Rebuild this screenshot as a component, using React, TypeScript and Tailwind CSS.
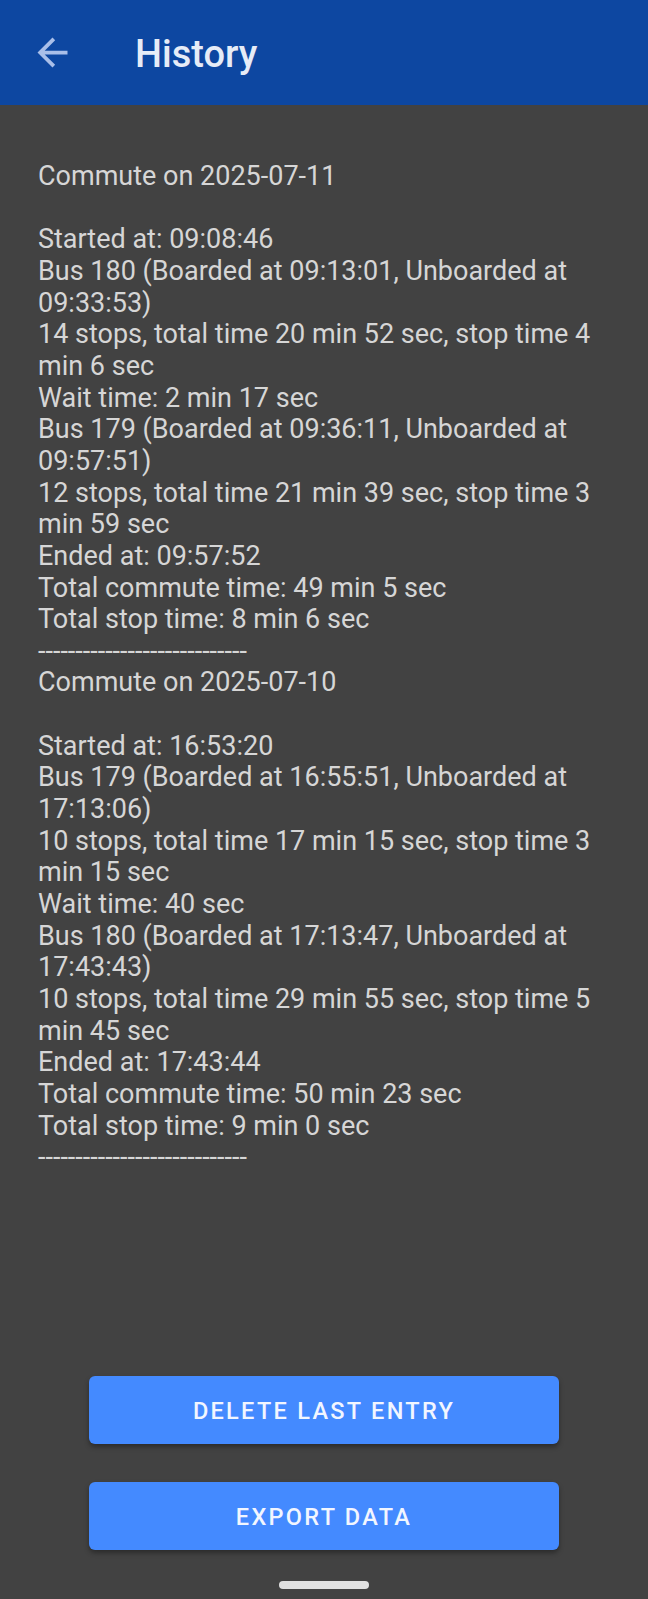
import React from "react";

const lines: string[] = [
  "Commute on 2025-07-11",
  "",
  "Started at: 09:08:46",
  "Bus 180 (Boarded at 09:13:01, Unboarded at 09:33:53)",
  "14 stops, total time 20 min 52 sec, stop time 4 min 6 sec",
  "Wait time: 2 min 17 sec",
  "Bus 179 (Boarded at 09:36:11, Unboarded at 09:57:51)",
  "12 stops, total time 21 min 39 sec, stop time 3 min 59 sec",
  "Ended at: 09:57:52",
  "Total commute time: 49 min 5 sec",
  "Total stop time: 8 min 6 sec",
  "----------------------------",
  "Commute on 2025-07-10",
  "",
  "Started at: 16:53:20",
  "Bus 179 (Boarded at 16:55:51, Unboarded at 17:13:06)",
  "10 stops, total time 17 min 15 sec, stop time 3 min 15 sec",
  "Wait time: 40 sec",
  "Bus 180 (Boarded at 17:13:47, Unboarded at 17:43:43)",
  "10 stops, total time 29 min 55 sec, stop time 5 min 45 sec",
  "Ended at: 17:43:44",
  "Total commute time: 50 min 23 sec",
  "Total stop time: 9 min 0 sec",
  "----------------------------",
];

export default function App() {
  return (
    <div
      className="flex h-[1599px] w-full flex-col bg-[#424242]"
      style={{ fontFamily: "Roboto, 'Noto Sans', sans-serif" }}
    >
      <header className="flex h-[105px] shrink-0 items-center bg-[#0d47a1]">
        <svg
          viewBox="0 0 24 24"
          className="ml-[30px] h-[45px] w-[45px] shrink-0"
          fill="#a9bfe9"
        >
          <path d="M20 11H7.83l5.59-5.59L12 4l-8 8 8 8 1.41-1.41L7.83 13H20v-2z" />
        </svg>
        <h1 className="ml-[60px] pt-[2px] text-[38px] font-medium leading-none text-[#e6ecf7]">
          History
        </h1>
      </header>

      <div className="flex-1 px-[38px] pt-[56px]">
        <div className="text-[27px] leading-[31.65px] text-[#d6d6d6]">
          {lines.map((l, i) =>
            l === "" ? (
              <div key={i} className="h-[31.65px]" />
            ) : (
              <div key={i}>{l}</div>
            )
          )}
        </div>
      </div>

      <div className="flex shrink-0 flex-col items-center">
        <button className="h-[68px] w-[470px] rounded-[6px] bg-[#448aff] pt-[3px] text-[23.5px] font-medium tracking-[2.3px] text-[#f2f6ff] shadow-[0_3px_5px_rgba(0,0,0,0.35)]">
          DELETE LAST ENTRY
        </button>
        <button className="mt-[38px] h-[68px] w-[470px] rounded-[6px] bg-[#448aff] pt-[3px] text-[23.5px] font-medium tracking-[2.3px] text-[#f2f6ff] shadow-[0_3px_5px_rgba(0,0,0,0.35)]">
          EXPORT DATA
        </button>
        <div className="mb-[10px] mt-[31px] h-[8px] w-[90px] rounded-full bg-[#e0e0e0]" />
      </div>
    </div>
  );
}
